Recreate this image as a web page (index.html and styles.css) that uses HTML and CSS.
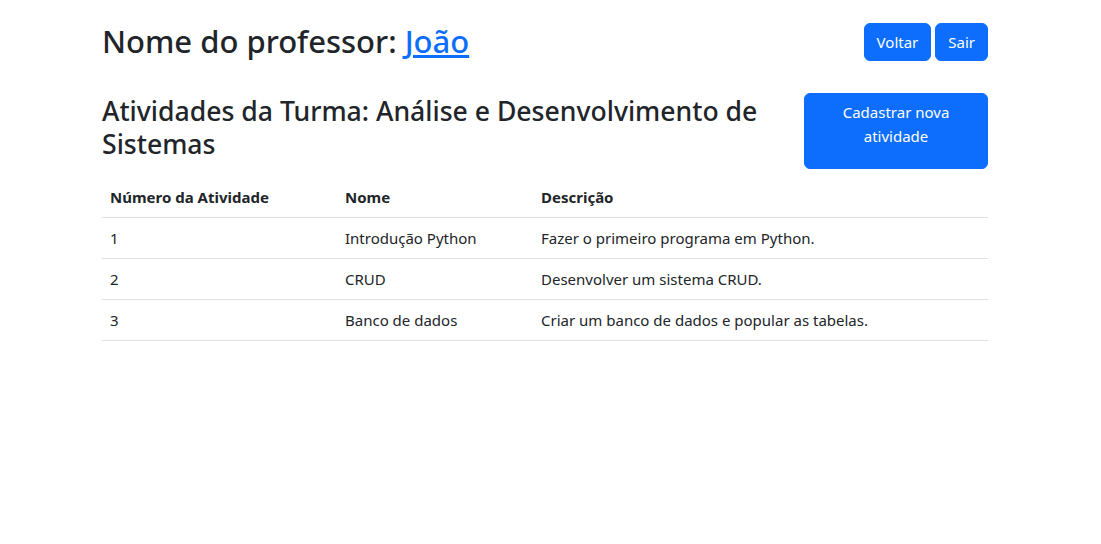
FILE: index.html
```html
<!DOCTYPE html>
<html lang="pt-BR">
<head>
<meta charset="utf-8">
<title>Atividades</title>
<link rel="stylesheet" href="styles.css">
</head>
<body>
<div class="page">
  <header class="top-row">
    <h2 class="title">Nome do professor: <a href="#" class="link">João</a></h2>
    <div class="actions">
      <a href="#" class="btn">Voltar</a>
      <a href="#" class="btn">Sair</a>
    </div>
  </header>
  <section class="sub-row">
    <h3 class="subtitle">Atividades da Turma: Análise e Desenvolvimento de Sistemas</h3>
    <a href="#" class="btn btn-big">Cadastrar nova atividade</a>
  </section>
  <table class="table">
    <thead>
      <tr><th class="c1">Número da Atividade</th><th class="c2">Nome</th><th>Descrição</th></tr>
    </thead>
    <tbody>
      <tr><td>1</td><td>Introdução Python</td><td>Fazer o primeiro programa em Python.</td></tr>
      <tr><td>2</td><td>CRUD</td><td>Desenvolver um sistema CRUD.</td></tr>
      <tr><td>3</td><td>Banco de dados</td><td>Criar um banco de dados e popular as tabelas.</td></tr>
    </tbody>
  </table>
</div>
</body>
</html>
```
FILE: styles.css
```css
* { box-sizing: border-box; }
body {
  margin: 0;
  font-family: "Noto Sans", "Open Sans", sans-serif;
  font-size: 16px;
  line-height: 1.5;
  color: #212529;
  background: #fff;
}
.page {
  width: 886px;
  margin-left: 102px;
  padding-top: 23px;
}
.top-row {
  display: flex;
  justify-content: space-between;
  align-items: center;
}
.title {
  margin: 0;
  font-size: 31px;
  font-weight: 500;
  line-height: 1.2;
}
.link { color: #0d6efd; text-decoration: underline; }
.actions { display: flex; gap: 4px; }
.btn {
  display: inline-block;
  background: #0d6efd;
  color: #fff;
  border: 1px solid #0d6efd;
  border-radius: 6px;
  padding: 6px 12px;
  font-size: 15px;
  line-height: 24px;
  text-decoration: none;
  text-align: center;
}
.sub-row {
  display: flex;
  justify-content: space-between;
  align-items: flex-start;
  margin-top: 32px;
}
.subtitle {
  margin: 2px 0 0;
  font-size: 26.6px;
  font-weight: 500;
  line-height: 33px;
  width: 680px;
}
.btn-big {
  width: 184px;
  height: 76px;
  padding: 6px 12px;
}
.table {
  width: 100%;
  border-collapse: collapse;
  margin-top: 8px;
  font-size: 15px;
}
.table th, .table td {
  text-align: left;
  padding: 8px;
  line-height: 24px;
  border-bottom: 1px solid #dee2e6;
  vertical-align: top;
}
.table th { font-weight: 700; }
.c1 { width: 235px; }
.c2 { width: 196px; }
```
